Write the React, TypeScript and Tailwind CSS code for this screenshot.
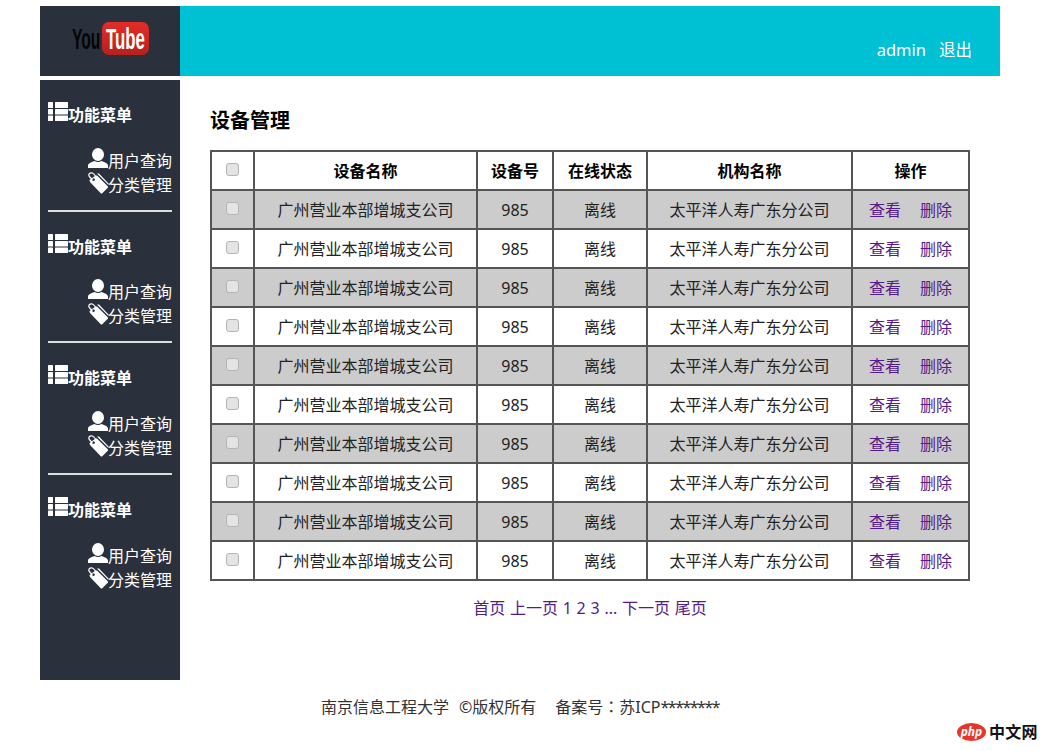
const FONT = "font-['Noto_Sans','Noto_Sans_CJK_SC',sans-serif]"
const rows = Array.from({ length: 10 }, (_, i) => i)
const sections = [0, 1, 2, 3]

function ListIcon() {
  return (
    <svg width="20" height="20" viewBox="0 0 20 20" fill="white" className="shrink-0">
      <rect x="0" y="0" width="5" height="6" rx="0.5" />
      <rect x="7" y="0" width="13" height="6" rx="0.5" />
      <rect x="0" y="7" width="5" height="5.5" rx="0.5" />
      <rect x="7" y="7" width="13" height="5.5" rx="0.5" />
      <rect x="0" y="13.5" width="5" height="5.5" rx="0.5" />
      <rect x="7" y="13.5" width="13" height="5.5" rx="0.5" />
    </svg>
  )
}

function UserIcon() {
  return (
    <svg width="20" height="20" viewBox="0 0 20 20" fill="white" className="shrink-0">
      <ellipse cx="10" cy="6.5" rx="6" ry="6.5" />
      <path d="M0 20 L0 17.5 C0 15.5 3 14.5 6.5 13 C8.5 14.2 11.5 14.2 13.5 13 C17 14.5 20 15.5 20 17.5 L20 20 Z" />
    </svg>
  )
}

function TagsIcon() {
  return (
    <svg width="21" height="22" viewBox="0 0 21 22" fill="white" className="shrink-0">
      <path fillRule="evenodd" d="M1.5 8 L7.5 3.5 L9 3.5 L20 14.5 L20 15.5 L14 21.5 L13 21.5 L2 10 Z M5.5 6.2 A1.4 1.4 0 1 0 5.51 6.2 Z" />
      <path d="M9 1.5 L11 1.5 L20.5 11.5 L20.5 13 Z" />
      <path d="M4.5 7.5 C1 5 0 3 1.5 1.5 C3 0 5.5 1 7.5 4" fill="none" stroke="white" strokeWidth="1.2" />
    </svg>
  )
}

function YoutubeLogo() {
  return (
    <svg width="78" height="34" viewBox="0 0 78 34">
      <defs>
        <linearGradient id="yt-red" x1="0" y1="0" x2="0" y2="1">
          <stop offset="0" stopColor="#e32c28" />
          <stop offset="1" stopColor="#b5211f" />
        </linearGradient>
      </defs>
      <rect x="31" y="0" width="47" height="33" rx="7" fill="url(#yt-red)" />
      <text transform="translate(1 27) scale(0.54 1)" fontFamily="'Liberation Sans',sans-serif" fontSize="29" fontWeight="700" fill="#050507">You</text>
      <text transform="translate(35 27) scale(0.58 1)" fontFamily="'Liberation Sans',sans-serif" fontSize="29" fontWeight="700" fill="#ffffff">Tube</text>
    </svg>
  )
}

function MenuSection({ last }: { last: boolean }) {
  return (
    <div className="h-[131.7px] flex flex-col">
      <div className="flex items-start pt-[22px] pl-2 h-[68px] font-bold text-white leading-[24px]">
        <ListIcon />
        <span className="mt-[1px]">功能菜单</span>
      </div>
      <div className="flex flex-col items-end pr-2 text-white leading-[24px]">
        <div className="flex items-start h-6">
          <UserIcon />
          <span className="mt-[1px]">用户查询</span>
        </div>
        <div className="flex items-start h-6">
          <TagsIcon />
          <span className="mt-[1px] -ml-[1px]">分类管理</span>
        </div>
      </div>
      {!last && <div className="mx-2 mt-[14px] h-[2px] bg-[#dddddd]" />}
    </div>
  )
}

function Checkbox() {
  return <span className="block mx-auto w-[13px] h-[13px] -mt-[2px] rounded-[3px] border border-[#b4b4b4] bg-[#e4e4e4]" />
}

function DeviceTable() {
  const th = 'border-2 border-[#555555] font-bold text-black p-0'
  const td = 'border-2 border-[#555555] text-center p-0'
  return (
    <table className="table-fixed w-[758px] border-collapse text-[16px]">
      <thead>
        <tr className="h-[39px] bg-white">
          <th className={`${th} w-[43px]`}><Checkbox /></th>
          <th className={`${th} w-[223px]`}>设备名称</th>
          <th className={`${th} w-[76px]`}>设备号</th>
          <th className={`${th} w-[94px]`}>在线状态</th>
          <th className={`${th} w-[205px]`}>机构名称</th>
          <th className={`${th} w-[117px]`}>操作</th>
        </tr>
      </thead>
      <tbody>
        {rows.map((i) => (
          <tr key={i} className={`h-[39px] ${i % 2 === 0 ? 'bg-[#cccccc]' : 'bg-white'}`}>
            <td className={td}><Checkbox /></td>
            <td className={td}>广州营业本部增城支公司</td>
            <td className={td}>985</td>
            <td className={td}>离线</td>
            <td className={td}>太平洋人寿广东分公司</td>
            <td className={td}>
              <span className="text-[#551a8b]">查看</span>
              <span className="text-[#551a8b] ml-[19px]">删除</span>
            </td>
          </tr>
        ))}
      </tbody>
    </table>
  )
}

export default function App() {
  return (
    <div className={`relative h-[751px] w-[1048px] overflow-hidden bg-white text-[16px] text-[#222222] ${FONT}`}>
      <div className="ml-10 w-[960px] pt-[6px]">
        <header className="flex h-[70px]">
          <div className="w-[140px] shrink-0 bg-[#2b303d] flex items-center justify-center pb-[5px]">
            <YoutubeLogo />
          </div>
          <div className="flex-1 bg-[#00c0d3] flex items-end justify-end pr-7 pb-[14px] text-white text-[16.5px] leading-6">
            <span>admin</span>
            <span className="ml-[13px]">退出</span>
          </div>
        </header>

        <div className="flex mt-1">
          <aside className="w-[140px] shrink-0 h-[600px] bg-[#2b303d]">
            {sections.map((s) => (
              <MenuSection key={s} last={s === 3} />
            ))}
          </aside>
          <main className="flex-1 min-w-0 px-[30px]">
            <h2 className="pt-[25px] h-[70px] text-[20px] font-bold text-black leading-[32px]">设备管理</h2>
            <DeviceTable />
            <div className="mt-[15px] text-center text-[#551a8b] leading-6 [word-spacing:0.6px]">
              首页 上一页 1 2 3 ... 下一页 尾页
            </div>
          </main>
        </div>

        <footer className="mt-[14px] text-center text-[#333333] leading-6">
          <span>南京信息工程大学</span>
          <span className="ml-[10px]">©版权所有</span>
          <span className="ml-[19px]">备案号<span className="font-['Noto_Sans_CJK_TC',sans-serif]">：</span>苏ICP<span className="tracking-[-1.5px]">********</span></span>
        </footer>
      </div>

      <div className="absolute left-[957px] top-[723px] flex items-center">
        <span className="flex items-center justify-center w-[29px] h-[18px] rounded-[50%] bg-[#e8352a] text-white text-[12px] font-bold italic leading-none">php</span>
        <span className="ml-[3px] text-[16px] text-[#111111] font-bold leading-none tracking-[0.2px]">中文网</span>
      </div>
    </div>
  )
}
